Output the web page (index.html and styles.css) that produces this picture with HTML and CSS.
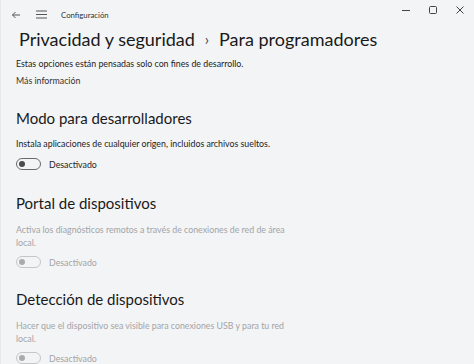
FILE: index.html
```html
<!DOCTYPE html>
<html lang="es">
<head>
<meta charset="utf-8">
<link rel="stylesheet" href="styles.css">
</head>
<body>
<div class="window">
  <div class="titlebar">
    <div class="tb-left">
      <svg class="ico back" width="10" height="10" viewBox="0 0 10 10"><path d="M9 5H1.5M4.5 2L1.5 5l3 3" fill="none" stroke="#555" stroke-width="1"/></svg>
      <svg class="ico menu" width="11" height="9" viewBox="0 0 11 9"><path d="M0 1h11M0 4.5h11M0 8h11" stroke="#555" stroke-width="1"/></svg>
      <span class="app">Configuración</span>
    </div>
    <div class="tb-right">
      <svg width="10" height="10" viewBox="0 0 10 10"><path d="M1 5.5h8" stroke="#444" stroke-width="1"/></svg>
      <svg width="10" height="10" viewBox="0 0 10 10"><rect x="1.5" y="1.5" width="7" height="7" rx="1" fill="none" stroke="#444" stroke-width="1"/></svg>
      <svg width="10" height="10" viewBox="0 0 10 10"><path d="M1.5 1.5l7 7M8.5 1.5l-7 7" stroke="#444" stroke-width="1"/></svg>
    </div>
  </div>
  <h1 class="crumb"><span>Privacidad y seguridad</span><span class="sep">›</span><span>Para programadores</span></h1>
  <p class="intro">Estas opciones están pensadas solo con fines de desarrollo.</p>
  <p class="link">Más información</p>

  <section class="group">
    <h2>Modo para desarrolladores</h2>
    <p class="desc">Instala aplicaciones de cualquier origen, incluidos archivos sueltos.</p>
    <div class="toggle-row"><span class="toggle"><span class="knob"></span></span><span class="state">Desactivado</span></div>
  </section>

  <section class="group disabled">
    <h2>Portal de dispositivos</h2>
    <p class="desc">Activa los diagnósticos remotos a través de conexiones de red de área local.</p>
    <div class="toggle-row"><span class="toggle"><span class="knob"></span></span><span class="state">Desactivado</span></div>
  </section>

  <section class="group disabled">
    <h2>Detección de dispositivos</h2>
    <p class="desc">Hacer que el dispositivo sea visible para conexiones USB y para tu red local.</p>
    <div class="toggle-row"><span class="toggle"><span class="knob"></span></span><span class="state">Desactivado</span></div>
  </section>
</div>
</body>
</html>
```
FILE: styles.css
```css
* { box-sizing: border-box; }
html, body { margin: 0; padding: 0; }
body {
  width: 474px;
  height: 364px;
  overflow: hidden;
  background: #f3f4f6;
  font-family: Lato, "Noto Sans", sans-serif;
  color: #1b1b1b;
}
.window {
  height: 364px;
  padding: 0 15px;
  border-left: 1px solid #e6e8ea;
}
.titlebar {
  height: 29px;
  display: flex;
  align-items: center;
  justify-content: space-between;
  margin: 0 -15px;
  padding: 0 9px 0 10px;
}
.tb-left { display: flex; align-items: center; }
.ico.back { margin-right: 15px; }
.ico.menu { margin-right: 14px; }
.app { font-size: 7.8px; color: #333; }
.tb-right { display: flex; gap: 17px; align-items: center; margin-top: -10px; }
.crumb {
  margin: 0 0 0 3px;
  font-weight: 400;
  font-size: 18px;
  line-height: 20px;
  display: flex;
  gap: 10px;
  color: #1a1a1a;
}
.crumb .sep { font-size: 15px; color: #444; }
.intro, .link {
  margin: 0;
  font-size: 8.8px;
  line-height: 13px;
  color: #222;
}
.intro { margin-top: 8px; }
.link { margin-top: 4px; color: #333; }
.group { margin-top: 22px; }
.group + .group { margin-top: 24px; }
.group + .group + .group { margin-top: 22px; }
h2 {
  margin: 0;
  font-weight: 400;
  font-size: 15px;
  line-height: 18px;
  color: #1a1a1a;
}
.desc {
  margin: 10px 0 0;
  font-size: 8.8px;
  line-height: 13px;
  color: #222;
  width: 273px;
}
.disabled .desc { margin-top: 11px; }
.toggle-row {
  display: flex;
  align-items: center;
  margin-top: 8px;
  gap: 8px;
}
.disabled .toggle-row { margin-top: 7px; }
.toggle {
  width: 25px;
  height: 12px;
  border: 1px solid #6b6b6b;
  border-radius: 6px;
  display: flex;
  align-items: center;
  padding-left: 2px;
}
.knob {
  width: 6px; height: 6px; border-radius: 50%; background: #4a4a4a;
}
.state { font-size: 8.8px; color: #222; }
.disabled .desc, .disabled .state { color: #a2a4a6; }
.disabled .toggle { border-color: #c4c6c8; }
.disabled .knob { background: #a8aaac; }
```
